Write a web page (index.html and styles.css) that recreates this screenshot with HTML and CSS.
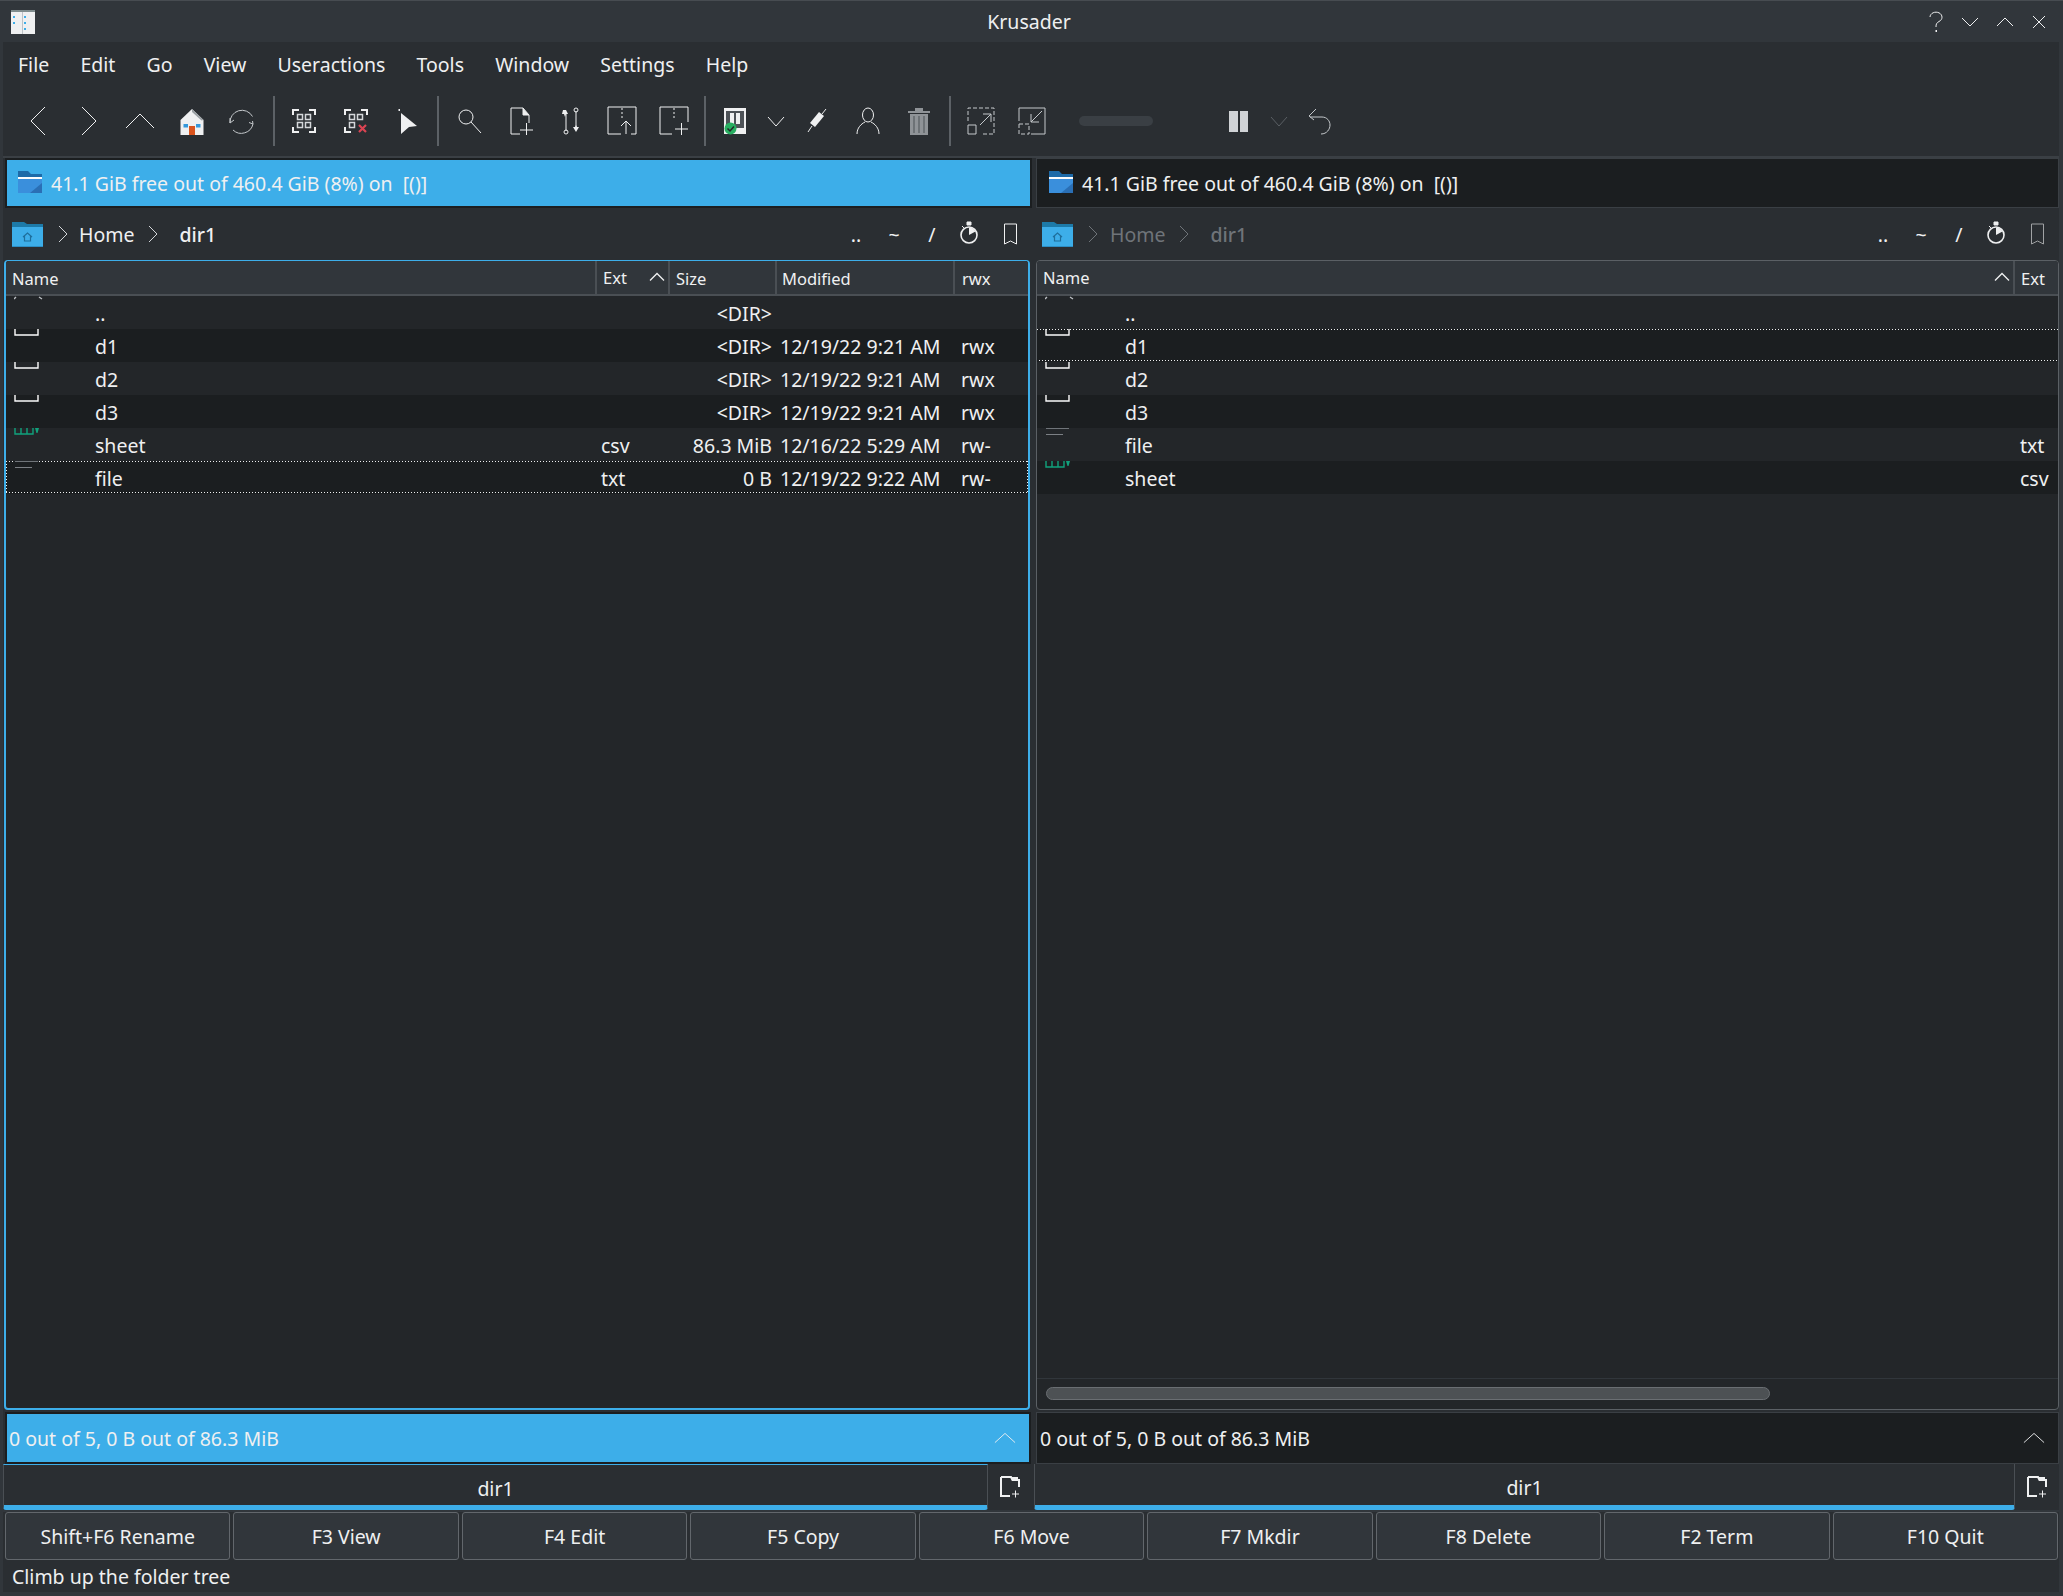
FILE: index.html
```html
<!DOCTYPE html>
<html lang="en">
<head>
  <meta charset="UTF-8">
  <title>Krusader</title>
  <link rel="stylesheet" href="styles.css">
</head>
<body>
  <svg class="defs" width="0" height="0">
    <symbol id="folder" viewBox="0 0 24 22">
      <path d="M0 0h10l3 3h11v19H0z" fill="#1d6aa8"/>
      <path d="M0 6h24v2H0z" fill="#fcfcfc"/>
      <path d="M0 8h24v14H0z" fill="#3a8fdc"/>
      <path d="M12 22L24 12v10z" fill="#2a6fb5"/>
    </symbol>
    <symbol id="home-folder" viewBox="0 0 31 25">
      <path d="M0 4V0h12l3 2h16v6H0z" fill="#1d7aa8"/>
      <path d="M0 5h31v20H0z" fill="#3daee9"/>
      <path d="M0 24h31v1H0z" fill="#2d8ec4"/>
      <path d="M11 15l4.500-4 4.500 4M12.500 14v5h6v-5" fill="none" stroke="#1f6f9c" stroke-width="1.200"/>
    </symbol>
    <symbol id="clock" viewBox="0 0 20 24">
      <circle cx="10" cy="14" r="8" fill="none" stroke="#eff0f1" stroke-width="1.600"/>
      <path d="M10 14V6.500a7.500 7.500 0 0 1 6.500 4z" fill="#eff0f1"/>
      <path d="M8 1h4v3H8zM3 5l2 2" fill="#eff0f1" stroke="#eff0f1"/>
    </symbol>
    <symbol id="bookmark" viewBox="0 0 16 22">
      <path d="M1.500 1h12v20M1.500 1v20M1.500 21l6-3 6 3" fill="none" stroke="#eff0f1"/>
    </symbol>
    <symbol id="tab-new" viewBox="0 0 20 22">
      <path d="M1 1v19h9M1 1h10l1.500 3H19v7" fill="none" stroke="#eff0f1" stroke-width="2"/>
      <path d="M11 1h7v3h-6z" fill="#eff0f1"/>
      <path d="M12 18h7M15.500 14.500v7" stroke="#eff0f1"/>
    </symbol>
    <symbol id="dir-stub" viewBox="0 0 30 7">
      <path d="M1 0v6h23V0" fill="none" stroke="#fcfcfc" stroke-width="1.400"/>
    </symbol>
    <symbol id="csv-stub" viewBox="0 0 30 7">
      <path d="M1 0v6h18V0M7 0v6M13 0v6" fill="none" stroke="#11a27c" stroke-width="1.400"/>
      <path d="M21 0h4l-1.500 5h-1z" fill="#11a27c"/>
    </symbol>
    <symbol id="file-stub" viewBox="0 0 30 7">
      <path d="M1 .5h23" stroke="#6f7479" fill="none"/>
      <path d="M1 6.500h17" stroke="#7c8085" fill="none"/>
    </symbol>
    <symbol id="up-stub" viewBox="0 0 30 7">
      <path d="M0 3l2-2M25 1l3 2" stroke="#bcc0c4" stroke-width="1.400" fill="none"/>
    </symbol>
    <symbol id="sel-box" viewBox="0 0 28 28">
      <path d="M3 8V3h6M19 3h6v5M3 20v5h6" fill="none" stroke="#eff0f1" stroke-width="2"/>
      <path d="M7.500 7.500h5v5h-5zM7.500 15.500h5v5h-5z" fill="none" stroke="#d4d7da" stroke-width="1.500"/>
    </symbol>
  </svg>

  <div class="window">
    <header class="titlebar">
      <svg class="app-icon" width="24" height="24" viewBox="0 0 24 24">
        <path d="M0 0h24v24H0z" fill="#eff0f1"/>
        <path d="M0 0h24v2H0z" fill="#7f8c8d"/>
        <path d="M11 2h1v22h-1z" fill="#bdc3c7"/>
        <path d="M2 6h2v2H2zM2 12h2v2H2zM13 6h2v2h-2zM13 12h2v2h-2zM13 18h2v2h-2z" fill="#3daee9"/>
      </svg>
      <span class="title">Krusader</span>
      <div class="win-btns">
        <svg width="16" height="22" viewBox="0 0 16 22"><path d="M2 6a6 5 0 1 1 9 4.500C8.500 12 8 13 8 16" fill="none" stroke="#eff0f1"/><path d="M7.500 19h1.500v2H7.500z" fill="#eff0f1"/></svg>
        <svg width="18" height="12" viewBox="0 0 18 12"><path d="M1 2l8 8 8-8" fill="none" stroke="#eff0f1"/></svg>
        <svg width="18" height="12" viewBox="0 0 18 12"><path d="M1 10l8-8 8 8" fill="none" stroke="#eff0f1"/></svg>
        <svg width="16" height="16" viewBox="0 0 16 16"><path d="M2 2l12 12M14 2L2 14" fill="none" stroke="#eff0f1"/></svg>
      </div>
    </header>

    <nav class="menubar">
      <span>File</span><span>Edit</span><span>Go</span><span>View</span><span>Useractions</span><span>Tools</span><span>Window</span><span>Settings</span><span>Help</span>
    </nav>

    <div class="toolbar">
      <div class="tool"><svg viewBox="0 0 28 28"><path class="line" d="M21 0L7 14l14 14"/></svg></div>
      <div class="tool"><svg viewBox="0 0 28 28"><path class="line" d="M7 0l14 14L7 28"/></svg></div>
      <div class="tool"><svg viewBox="0 0 28 28"><path class="line" d="M0 21L14 7l14 14"/></svg></div>
      <div class="tool">
        <svg viewBox="0 0 28 28">
          <path d="M14 2l11.500 11v15h-23V13z" fill="#eff0f1"/>
          <path d="M14 2l11.500 11-2 .5L14 5z" fill="#9aa0a4"/>
          <path d="M5.500 17h4.500v3.500H5.500zM18 17h4.500v3.500H18z" fill="#3498db"/>
          <path d="M11 19h6v9h-6z" fill="#d9541e"/>
        </svg>
      </div>
      <div class="tool"><svg viewBox="0 0 28 28"><path class="line soft" transform="translate(-1.500 0)" d="M2.500 16A12 12 0 0 1 25 9.500M25.500 17A12 12 0 0 1 5.500 23M2.500 11l0 5 4-3M25 14l.5 3-4-1.500"/></svg></div>
      <i class="sep"></i>
      <div class="tool"><svg viewBox="0 0 28 28"><use href="#sel-box"/><path d="M25 20v5h-6" fill="none" stroke="#eff0f1" stroke-width="2"/><path d="M15.500 7.500h5v5h-5zM15.500 15.500h5v5h-5z" fill="none" stroke="#d4d7da" stroke-width="1.500"/></svg></div>
      <div class="tool"><svg viewBox="0 0 28 28"><use href="#sel-box"/><path d="M15.500 7.500h5v5h-5z" fill="none" stroke="#d4d7da" stroke-width="1.500"/><path d="M17 18l7 7M24 18l-7 7" stroke="#da4453" stroke-width="2.200" fill="none"/></svg></div>
      <div class="tool"><svg viewBox="0 0 28 28"><path d="M8 6l16 13-8 1-8 7z" fill="#eff0f1"/><path d="M5.500 2h1.500v2H5.500z" fill="#eff0f1"/></svg></div>
      <i class="sep"></i>
      <div class="tool"><svg viewBox="0 0 28 28"><circle cx="11" cy="10" r="7" class="line"/><path class="line" d="M16 15l10 11"/></svg></div>
      <div class="tool"><svg viewBox="0 0 28 28"><path class="line" d="M14 27H5V1h12l6 7v8M17 1v7h6"/><path d="M17 1l6 7h-6z" fill="#eff0f1"/><path class="line" d="M14 23h13M20.500 16v12" stroke-width="1.500"/></svg></div>
      <div class="tool"><svg viewBox="0 0 28 28"><path class="line" d="M9 6v18M19 4v18"/><path d="M6 3h3l2 4H9l-1 3-1-3H5zM19 25l-3-5h2l1-2 1 2h2z" fill="#eff0f1"/><circle cx="9" cy="25" r="2" class="line"/><circle cx="19" cy="3" r="2" class="line"/></svg></div>
      <div class="tool"><svg viewBox="0 0 28 28"><path class="line" d="M13 27H0V0h28v27h-5"/><path class="line" d="M14 1v12" stroke-dasharray="2 2" stroke-width="2.500"/><path class="line" d="M18 27V14M13 19l5-5 5 5"/></svg></div>
      <div class="tool"><svg viewBox="0 0 28 28"><path class="line" d="M12 27H0V0h28v15"/><path class="line" d="M14 1v12" stroke-dasharray="2 2" stroke-width="2.500"/><path class="line" d="M15 22h13M21.500 16v12" stroke-width="1.500"/></svg></div>
      <i class="sep"></i>
      <div class="tool">
        <svg viewBox="0 0 28 28">
          <path d="M3 1h22v26H3z" fill="#eff0f1"/>
          <path d="M5 4h18v17H5z" fill="#4d5257"/>
          <path d="M9 6h4v11H9zM15 6h4v11h-4z" fill="#eff0f1"/>
          <circle cx="9.500" cy="21.500" r="6" fill="#27ae60"/>
          <path d="M6.500 21.500l2.500 2.500 4-4.500" fill="none" stroke="#232629" stroke-width="1.500"/>
        </svg>
      </div>
      <div class="tool small"><svg viewBox="0 0 16 28"><path class="line" d="M0 10l8 9 8-9"/></svg></div>
      <div class="tool"><svg viewBox="0 0 28 28"><path d="M16 5l5 4-9 11-5-4z" fill="#eff0f1"/><path class="line" d="M5 25l4-6M19 7l4-5"/></svg></div>
      <div class="tool"><svg viewBox="0 0 28 28"><ellipse cx="14" cy="8" rx="5.500" ry="7" class="line"/><path class="line" d="M3 27c0-6 4-10 8-12M25 27c0-6-4-10-8-12" stroke-width="1.200"/></svg></div>
      <div class="tool">
        <svg viewBox="0 0 28 28">
          <path d="M3 4h22v2H3zM10 4V1h8v3" fill="#8f9397"/>
          <path d="M5 7h18v21H5z" fill="#8f9397"/>
          <path d="M9 9v17M14 9v17M19 9v17" stroke="#63686c" stroke-width="1.500"/>
        </svg>
      </div>
      <i class="sep"></i>
      <div class="tool"><svg viewBox="0 0 28 28"><path class="line soft" d="M1 14V1h26v26H14" stroke-dasharray="4 2"/><path class="line soft" d="M1 18h8v9H1z"/><path class="line soft" d="M13 18l11-11M16 7h8v8"/></svg></div>
      <div class="tool"><svg viewBox="0 0 28 28"><path class="line soft" d="M1 14V1h26v26H13"/><path class="line soft" d="M1 17h10v10H1z" stroke-dasharray="4 2"/><path class="line soft" d="M24 4L13 15M13 7v8h8"/></svg></div>
      <div class="slider"></div>
      <div class="tool"><svg viewBox="0 0 28 28"><path d="M5 4h9v21H5zM16 4h8v21h-8z" fill="#d0d3d6"/></svg></div>
      <div class="tool small"><svg viewBox="0 0 16 28"><path class="line off" d="M0 10l8 9 8-9"/></svg></div>
      <div class="tool"><svg viewBox="0 0 28 28"><path class="line soft" d="M4 10h12c5 0 8 4 8 8s-3 9-9 9M10 2L3 9l5 4"/></svg></div>
    </div>

    <main class="panels">
      <!-- left panel, has focus -->
      <section class="panel active">
        <div class="free-bar">
          <svg class="free-icon"><use href="#folder"/></svg>
          <span>41.1 GiB free out of 460.4 GiB (8%) on&nbsp; [()]</span>
        </div>
        <div class="crumbs">
          <svg class="crumb-folder"><use href="#home-folder"/></svg>
          <svg class="chev" viewBox="0 0 10 18"><path d="M1 1l8 8-8 8"/></svg>
          <span class="crumb">Home</span>
          <svg class="chev" viewBox="0 0 10 18"><path d="M1 1l8 8-8 8"/></svg>
          <span class="crumb current">dir1</span>
          <div class="quick">
            <span>..</span><span>~</span><span>/</span>
            <svg class="q-clock"><use href="#clock"/></svg>
            <svg class="q-mark"><use href="#bookmark"/></svg>
          </div>
        </div>
        <div class="list">
          <div class="head cols">
            <div>Name</div>
            <div class="sorted">Ext<svg viewBox="0 0 16 9"><path d="M1 8l7-7 7 7"/></svg></div>
            <div>Size</div>
            <div>Modified</div>
            <div>rwx</div>
          </div>
          <div class="row cols">
            <div class="name"><svg class="stub"><use href="#up-stub"/></svg>..</div><div></div><div class="size">&lt;DIR&gt;</div><div></div><div></div>
          </div>
          <div class="row alt cols">
            <div class="name"><svg class="stub"><use href="#dir-stub"/></svg>d1</div><div></div><div class="size">&lt;DIR&gt;</div><div>12/19/22 9:21 AM</div><div>rwx</div>
          </div>
          <div class="row cols">
            <div class="name"><svg class="stub"><use href="#dir-stub"/></svg>d2</div><div></div><div class="size">&lt;DIR&gt;</div><div>12/19/22 9:21 AM</div><div>rwx</div>
          </div>
          <div class="row alt cols">
            <div class="name"><svg class="stub"><use href="#dir-stub"/></svg>d3</div><div></div><div class="size">&lt;DIR&gt;</div><div>12/19/22 9:21 AM</div><div>rwx</div>
          </div>
          <div class="row cols">
            <div class="name"><svg class="stub"><use href="#csv-stub"/></svg>sheet</div><div>csv</div><div class="size">86.3 MiB</div><div>12/16/22 5:29 AM</div><div>rw-</div>
          </div>
          <div class="row alt cols current-row">
            <div class="name"><svg class="stub"><use href="#file-stub"/></svg>file</div><div>txt</div><div class="size">0 B</div><div>12/19/22 9:22 AM</div><div>rw-</div>
          </div>
        </div>
        <div class="count-bar">
          <span>0 out of 5, 0 B out of 86.3 MiB</span>
          <svg viewBox="0 0 24 12"><path d="M1 11L12 1l11 10"/></svg>
        </div>
        <div class="tabs">
          <div class="tab">dir1</div>
          <div class="tab-add"><svg><use href="#tab-new"/></svg></div>
        </div>
      </section>

      <!-- right panel -->
      <section class="panel">
        <div class="free-bar">
          <svg class="free-icon"><use href="#folder"/></svg>
          <span>41.1 GiB free out of 460.4 GiB (8%) on&nbsp; [()]</span>
        </div>
        <div class="crumbs">
          <svg class="crumb-folder"><use href="#home-folder"/></svg>
          <svg class="chev" viewBox="0 0 10 18"><path d="M1 1l8 8-8 8"/></svg>
          <span class="crumb">Home</span>
          <svg class="chev" viewBox="0 0 10 18"><path d="M1 1l8 8-8 8"/></svg>
          <span class="crumb current">dir1</span>
          <div class="quick">
            <span>..</span><span>~</span><span>/</span>
            <svg class="q-clock"><use href="#clock"/></svg>
            <svg class="q-mark"><use href="#bookmark"/></svg>
          </div>
        </div>
        <div class="list">
          <div class="head cols-right">
            <div class="sorted">Name<svg viewBox="0 0 16 9"><path d="M1 8l7-7 7 7"/></svg></div>
            <div>Ext</div>
          </div>
          <div class="row cols-right">
            <div class="name"><svg class="stub"><use href="#up-stub"/></svg>..</div><div></div>
          </div>
          <div class="row alt cols-right dotted-row">
            <div class="name"><svg class="stub"><use href="#dir-stub"/></svg>d1</div><div></div>
          </div>
          <div class="row cols-right">
            <div class="name"><svg class="stub"><use href="#dir-stub"/></svg>d2</div><div></div>
          </div>
          <div class="row alt cols-right">
            <div class="name"><svg class="stub"><use href="#dir-stub"/></svg>d3</div><div></div>
          </div>
          <div class="row cols-right">
            <div class="name"><svg class="stub"><use href="#file-stub"/></svg>file</div><div>txt</div>
          </div>
          <div class="row alt cols-right">
            <div class="name"><svg class="stub"><use href="#csv-stub"/></svg>sheet</div><div>csv</div>
          </div>
          <div class="scrollbar"><div class="thumb"></div></div>
        </div>
        <div class="count-bar">
          <span>0 out of 5, 0 B out of 86.3 MiB</span>
          <svg viewBox="0 0 24 12"><path d="M1 11L12 1l11 10"/></svg>
        </div>
        <div class="tabs">
          <div class="tab">dir1</div>
          <div class="tab-add"><svg><use href="#tab-new"/></svg></div>
        </div>
      </section>
    </main>

    <div class="fkeys">
      <button>Shift+F6 Rename</button>
      <button>F3 View</button>
      <button>F4 Edit</button>
      <button>F5 Copy</button>
      <button>F6 Move</button>
      <button>F7 Mkdir</button>
      <button>F8 Delete</button>
      <button>F2 Term</button>
      <button>F10 Quit</button>
    </div>
    <footer class="statusbar">Climb up the folder tree</footer>
  </div>
</body>
</html>
```

FILE: styles.css
```css
* {
  box-sizing: border-box;
}

html, body {
  margin: 0;
  height: 100%;
  overflow: hidden;
}

body {
  background: #31363b;
  color: #eff0f1;
  font-family: "Noto Sans", sans-serif;
  font-size: 19.5px;
}

.defs {
  position: absolute;
}

.window {
  display: flex;
  flex-direction: column;
  height: 100vh;
}

/* title bar */
.titlebar {
  display: grid;
  grid-template-columns: 1fr auto 1fr;
  align-items: center;
  height: 42px;
  flex: none;
  padding: 0 16px 0 11px;
  background: #31363b;
  border-top: 1px solid #474c51;
}

.win-btns {
  display: flex;
  align-items: center;
  justify-content: flex-end;
  gap: 17px;
}

/* menu and toolbar */
.menubar {
  display: flex;
  align-items: center;
  gap: 31.2px;
  height: 46px;
  flex: none;
  margin: 0 4px 0 3px;
  padding: 0 0 2px 15px;
  background: #2a2e32;
}

.toolbar {
  display: flex;
  align-items: center;
  height: 70px;
  flex: none;
  margin: 0 4px 0 3px;
  padding: 0 0 2px 9px;
  background: #2a2e32;
  border-bottom: 2px solid #3a3f44;
}

.tool {
  display: flex;
  align-items: center;
  justify-content: center;
  width: 51.3px;
  flex: none;
}

.tool svg {
  width: 28px;
  height: 28px;
  overflow: visible;
}

.tool.small {
  width: 30px;
}

.tool.small svg {
  width: 16px;
}

.line {
  fill: none;
  stroke: #eff0f1;
  stroke-width: 1;
}

.line.soft {
  stroke: #c4c8cb;
}

.line.off {
  stroke: #5a5f64;
}

.sep {
  width: 2px;
  height: 50px;
  flex: none;
  margin: 0 4.15px;
  background: #5c6166;
}

.slider {
  width: 74px;
  height: 10px;
  flex: none;
  margin: 0 60px 0 21px;
  border-radius: 5px;
  background: #3a3f44;
}

/* panels */
.panels {
  display: grid;
  grid-template-columns: 1030px 1026px;
  flex: 1;
  min-height: 0;
  margin: 0 4px 0 3px;
  background: #2a2e32;
}

.panel {
  display: flex;
  flex-direction: column;
  min-height: 0;
  padding-left: 1px;
}

.panel.active {
  padding-right: 1px;
}

.panel + .panel {
  padding-left: 3px;
}

.free-bar {
  display: flex;
  align-items: center;
  gap: 9px;
  height: 50px;
  flex: none;
  padding-left: 12px;
  background: #1b1e20;
  border: 1px solid #3a3f44;
  outline: 1px solid #1b1e20;
  outline-offset: -2px;
}

.active .free-bar {
  margin-left: 1px;
  background: #3daee9;
  border: 2px solid #1b1e20;
  outline: none;
  padding-left: 11px;
}

.free-icon {
  width: 24px;
  height: 22px;
  margin-top: -2px;
}

.crumbs {
  display: flex;
  align-items: center;
  height: 52px;
  flex: none;
  padding: 0 13px 0 8px;
}

.panel + .panel .crumbs {
  padding-left: 6px;
}

.crumb-folder {
  width: 31px;
  height: 25px;
  flex: none;
  margin-right: 15px;
}

.chev {
  width: 10px;
  height: 18px;
  flex: none;
  fill: none;
  stroke: #d4d7da;
}

.crumb {
  margin: 0 14px 0 11px;
}

.panel + .panel .crumb {
  margin-left: 12px;
}

.crumb + .chev + .crumb,
.panel + .panel .crumb + .chev + .crumb {
  margin-left: 21px;
  font-weight: 500;
}

.quick {
  display: flex;
  align-items: center;
  margin-left: auto;
}

.quick span {
  width: 38px;
  text-align: center;
}

.q-clock {
  width: 20px;
  height: 24px;
  margin: -2px 24px 0 8px;
}

.q-mark {
  width: 16px;
  height: 22px;
}

/* inactive panel text */
.panel:not(.active) .crumb,
.panel:not(.active) .chev {
  color: #6f7479;
  stroke: #6f7479;
}

.panel:not(.active) .q-mark {
  opacity: 0.6;
}

.list {
  display: flex;
  flex-direction: column;
  flex: 1;
  min-height: 0;
  background: #232629;
  border: 1px solid #5b6065;
  border-radius: 4px;
  position: relative;
}

.active .list {
  border: 2px solid #3daee9;
  border-top-width: 1px;
  margin-right: 2px;
}

.head {
  height: 35px;
  flex: none;
  background: #31363b;
  border-bottom: 2px solid #4a4f54;
  font-size: 16.5px;
  line-height: 35px;
  border-radius: 3px 3px 0 0;
}

.head > div {
  padding-left: 6px;
  border-left: 2px solid #4a4f54;
  height: 33px;
}

.head > div:first-child {
  border-left: 0;
}

.cols {
  display: grid;
  grid-template-columns: 589px 73px 107px 178px 1fr;
}

.head.cols > :nth-child(4) {
  padding-left: 5px;
}

.head.cols > :nth-child(5) {
  padding-left: 7px;
}

.cols-right {
  display: grid;
  grid-template-columns: 976px 1fr;
}

.sorted {
  display: flex;
  align-items: center;
  justify-content: space-between;
  padding-right: 3px;
}

.sorted svg {
  width: 16px;
  height: 10px;
  fill: none;
  stroke: #eff0f1;
  stroke-width: 1.300;
  margin-top: -2px;
}

.row {
  height: 33px;
  flex: none;
  line-height: 33px;
  position: relative;
}

.row > div {
  padding-left: 6px;
  white-space: nowrap;
  overflow: hidden;
  padding-top: 1px;
}

.row.cols > :nth-child(4) {
  padding-left: 5px;
}

.row.cols > :nth-child(5) {
  padding-left: 8px;
}

.row.alt {
  background-color: #1b1e20;
}

.row > .size {
  padding-left: 0;
  padding-right: 3px;
  text-align: right;
}

.row > .name {
  padding-left: 89px;
}

.cols-right > .name {
  padding-left: 88px;
}

.cols-right > .name + div {
  padding-left: 7px;
}

.stub {
  position: absolute;
  top: 0;
  left: 8px;
  width: 30px;
  height: 7px;
  overflow: visible;
}

/* focus frame of the current item */
.current-row {
  --dots-x: repeating-linear-gradient(90deg, #eff0f1 0 1px, transparent 1px 3px);
  --dots-y: repeating-linear-gradient(180deg, #eff0f1 0 1px, transparent 1px 3px);
  background-image: var(--dots-x), var(--dots-x), var(--dots-y), var(--dots-y);
  background-size: 100% 1px, 100% 1px, 1px 31px, 1px 31px;
  background-position: 0 0, 0 31px, 0 0, 100% 0;
  background-repeat: no-repeat;
}

.dotted-row {
  --dots-x: repeating-linear-gradient(90deg, #eff0f1 0 1px, transparent 1px 3px);
  background-image: var(--dots-x), var(--dots-x);
  background-size: 100% 1px, 100% 1px;
  background-position: 0 0, 2px 31px;
  background-repeat: no-repeat;
}

.scrollbar {
  margin-top: auto;
  height: 31px;
  padding: 8px 9px 0;
  border-top: 1px solid #31363b;
  flex: none;
}

.thumb {
  width: 724px;
  height: 13px;
  border-radius: 7px;
  background: #4d5154;
  border: 1px solid #6a6e72;
}

.count-bar {
  display: flex;
  align-items: center;
  justify-content: space-between;
  height: 52px;
  flex: none;
  margin-top: 2px;
  padding: 0 11px 0 3px;
  background: #1b1e20;
  border: 1px solid #3a3f44;
}

.active .count-bar {
  background: #3daee9;
  border: 2px solid #1b1e20;
  padding-left: 2px;
  margin: 2px 1px 0 1px;
}

.count-bar svg {
  width: 22px;
  height: 12px;
  fill: none;
  stroke: #eff0f1;
  margin-right: 2px;
}

.tabs {
  display: flex;
  height: 46px;
  flex: none;
  margin-left: -1px;
}

.panel + .panel .tabs {
  margin-left: -2px;
}

.tab {
  flex: 1;
  text-align: center;
  line-height: 48px;
  height: 46px;
  background: #2a2e32;
  border-left: 1px solid #4a4f54;
  border-right: 1px solid #4a4f54;
  border-bottom: 5px solid #3daee9;
  border-radius: 0 0 3px 3px;
}

.active .tab {
  border-top: 1px solid #3daee9;
}

.tab-add {
  display: flex;
  align-items: center;
  justify-content: center;
  width: 44px;
  flex: none;
}

.tab-add svg {
  width: 20px;
  height: 22px;
}

/* function keys */
.fkeys {
  display: grid;
  grid-template-columns: repeat(9, 1fr);
  gap: 3px;
  height: 48px;
  flex: none;
  margin: 2px 4px 0 3px;
  padding: 0 1px 0 2px;
  background: #2a2e32;
}

.fkeys button {
  font: inherit;
  color: #eff0f1;
  background: #31363b;
  border: 1px solid #62676c;
  border-radius: 3px;
  padding: 0;
}

.statusbar {
  height: 32px;
  flex: none;
  margin: 0 4px 4px 3px;
  padding-left: 9px;
  line-height: 33px;
  background: #2a2e32;
}
```
